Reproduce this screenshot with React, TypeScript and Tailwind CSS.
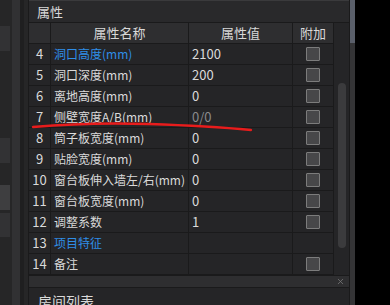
import { X } from 'lucide-react';

type Row = {
  n: number;
  name: string;
  value: string;
  blue?: boolean;
  dim?: boolean;
  check: boolean;
};

const rows: Row[] = [
  { n: 4, name: '洞口高度(mm)', value: '2100', blue: true, check: true },
  { n: 5, name: '洞口深度(mm)', value: '200', check: true },
  { n: 6, name: '离地高度(mm)', value: '0', check: true },
  { n: 7, name: '侧壁宽度A/B(mm)', value: '0/0', dim: true, check: true },
  { n: 8, name: '筒子板宽度(mm)', value: '0', check: true },
  { n: 9, name: '贴脸宽度(mm)', value: '0', check: true },
  { n: 10, name: '窗台板伸入墙左/右(mm)', value: '0', check: true },
  { n: 11, name: '窗台板宽度(mm)', value: '0', check: true },
  { n: 12, name: '调整系数', value: '1', check: true },
  { n: 13, name: '项目特征', value: '', blue: true, check: false },
  { n: 14, name: '备注', value: '', check: true },
];

const cell = 'h-[21px] overflow-hidden border-r border-b border-[#1a1a1b] flex items-center';

// Little grey checkbox used in the 附加 column
function Box() {
  return <div className="h-[14px] w-[14px] rounded-[1px] border border-[#7c7c7c] bg-[#474749]" />;
}

function LeftRail() {
  return (
    <div className="flex h-full w-[28px] shrink-0 bg-[#262627]">
      <div className="flex w-[10px] flex-col">
        <div className="h-[26px]" />
        <div className="h-[25px] bg-[#323234]" />
        <div className="h-[87px]" />
        <div className="h-[25px] bg-[#323234]" />
        <div className="h-[22px]" />
        <div className="h-[25px] bg-[#3e3e40]" />
        <div className="h-[3px]" />
        <div className="h-[24px] bg-[#323234]" />
      </div>
      <div className="w-[2px]" />
      <div className="w-[8px] bg-[#313133]" />
      <div className="w-[4px] bg-[#1f1f20]" />
      <div className="w-[4px]" />
    </div>
  );
}

export default function App() {
  return (
    <div
      className="flex h-[305px] w-[390px] overflow-hidden bg-black text-[13px] text-[#dadada]"
      style={{ fontFamily: '"Noto Sans CJK SC", "Noto Sans", sans-serif' }}
    >
      <LeftRail />

      <div className="flex h-full w-[322px] shrink-0 flex-col bg-[#1f1f20]">
        {/* 属性 panel */}
        <div className="relative flex h-[278px] flex-col border-x border-b border-[#1a1a1b] bg-[#252527]">
          <div className="flex h-[23px] items-center border-t border-b border-t-[#3a3a3c] border-b-[#1a1a1b] bg-[#29292b] pl-[8px] leading-none text-[#d8d8d8]">
            属性
          </div>
          <div className="flex flex-1">
            <div className="grid w-[305px] grid-cols-[22px_138px_104px_41px] content-start">
              <div className={`${cell} bg-[#2e2e30]`} />
              <div className={`${cell} justify-center bg-[#2e2e30] text-[#d8d8d8]`}>属性名称</div>
              <div className={`${cell} justify-center bg-[#2e2e30] text-[#d8d8d8]`}>属性值</div>
              <div className={`${cell} justify-center bg-[#2e2e30] text-[#d8d8d8]`}>附加</div>
              {rows.map(r => (
                <div key={r.n} className="contents">
                  <div className={`${cell} justify-center`}>{r.n}</div>
                  <div
                    className={`${cell} whitespace-nowrap pl-[3px] text-[12px] ${r.blue ? 'text-[#2f8ee8]' : ''}`}
                  >
                    {r.name}
                  </div>
                  <div className={`${cell} pl-[3px] ${r.dim ? 'text-[#8a8a8c]' : ''}`}>{r.value}</div>
                  <div className={`${cell} justify-center`}>{r.check && <Box />}</div>
                </div>
              ))}
            </div>
            <div className="flex w-[15px] flex-col items-center pt-[60px]">
              <div className="h-[165px] w-[8px] rounded-full bg-[#3b3b3d]" />
            </div>
          </div>

          {/* red hand-drawn underline */}
          <svg className="pointer-events-none absolute left-0 top-0" width="322" height="278">
            <path
              d="M4 127 Q 60 122 120 124 T 222 130"
              fill="none"
              stroke="#e81c1c"
              strokeWidth="2.4"
              strokeLinecap="round"
            />
          </svg>
        </div>

        <div className="h-[4px]" />

        {/* 房间列表 panel */}
        <div className="flex flex-1 flex-col border-x border-[#1a1a1b] bg-[#252527]">
          <div className="flex h-[12px] items-center justify-end border-b border-[#1a1a1b] bg-[#2e2e30] pr-[4px]">
            <X className="h-[9px] w-[9px] text-[#7a7a7a]" strokeWidth={2} />
          </div>
          <div className="pl-[9px] pt-[5px] text-[14px] leading-[16px] text-[#d8d8d8]">房间列表</div>
        </div>
      </div>

      <div className="flex h-full w-[5px] shrink-0 flex-col bg-[#343436]">
        <div className="h-[43px] bg-[#5a5f6a]" />
      </div>
    </div>
  );
}
